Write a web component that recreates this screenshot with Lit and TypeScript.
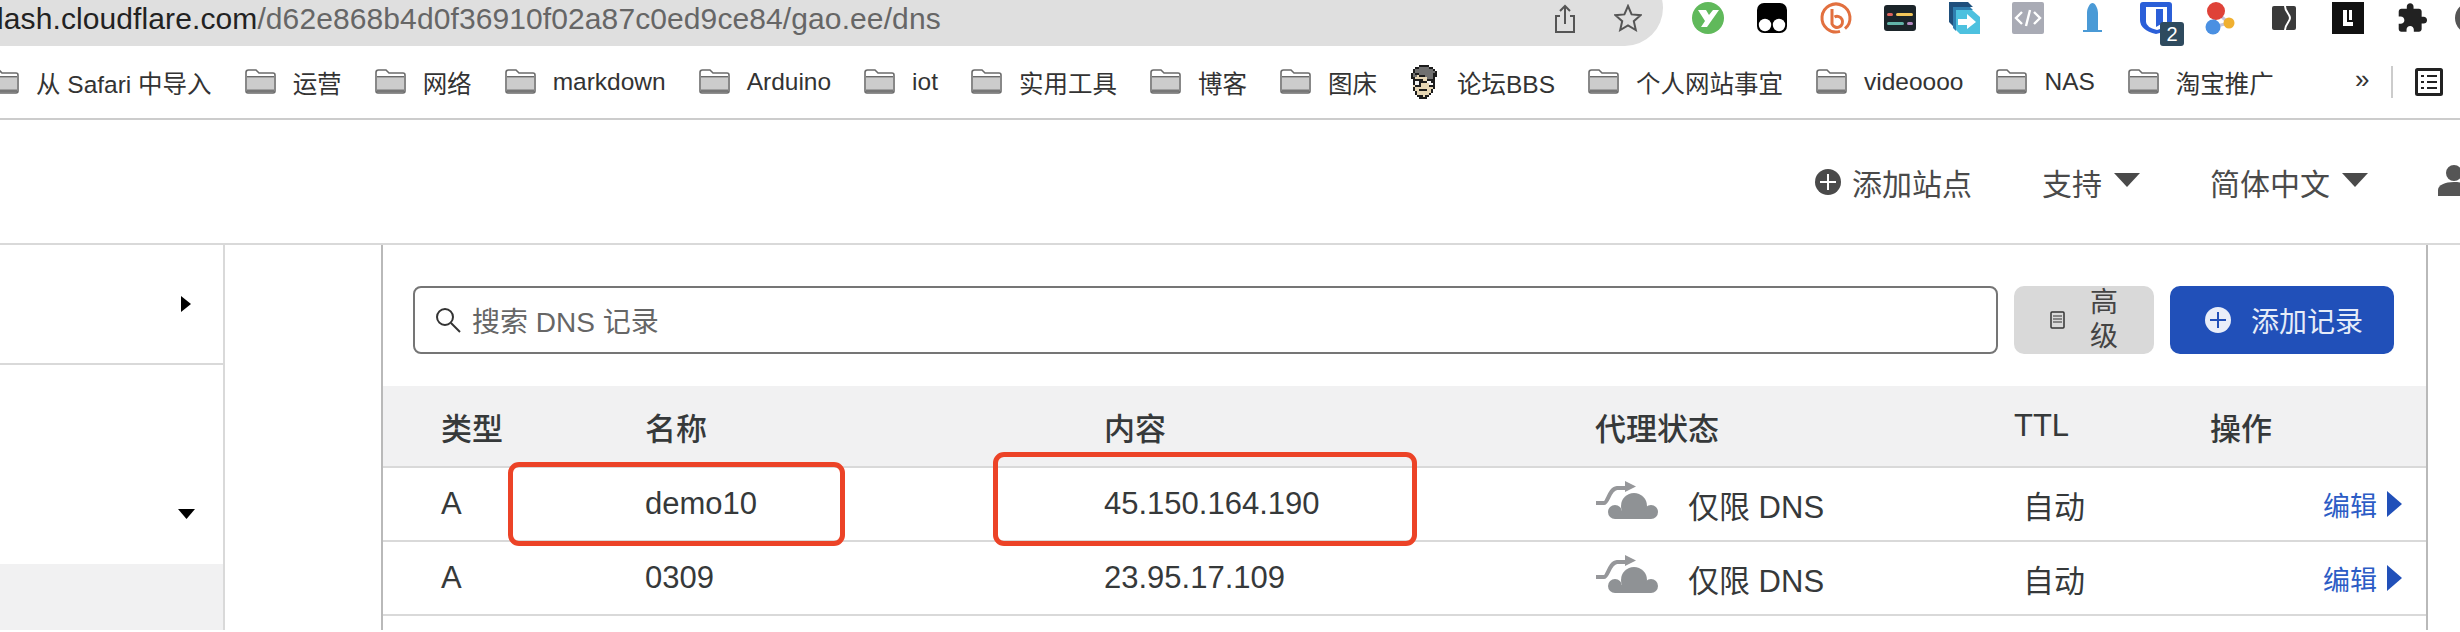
import { LitElement, html, css, svg } from 'lit';
import { customElement } from 'lit/decorators.js';

const bookmarks = ['运营', '网络', 'markdown', 'Arduino', 'iot', '实用工具', '博客', '图床', '论坛BBS', '个人网站事宜', 'videoooo', 'NAS', '淘宝推广'];

const face = [
  '....kkkkk....',
  '..kkgggggkk..',
  '.kgggggggggk.',
  '.kggggggggggk',
  'kgkkgggggggkk',
  'kggskkkggggkk',
  'kkssssssgggk.',
  '.kkkkksskkkk.',
  '.kwwkkkkwwkk.',
  '.kwwksssswwk.',
  '.skkksssskkk.',
  '.ksssssssssk.',
  '.ksskkkkssk..',
  '..ksssssssk..',
  '..kssssssk...',
  '...kkkskk....',
  '....kkkk.....',
];
const faceColors: Record<string, string> = { k: '#1c1c1c', g: '#707070', s: '#e6d6b4', w: '#f4f4f4' };

const folder = html`<svg class="bm-icon" viewBox="0 0 31 25">
  <path d="M1 3.5Q1 1 3.5 1H11L14 4H28Q30 4 30 6V22Q30 24 28 24H3Q1 24 1 22Z" fill="#fff" stroke="#6b6b6b" stroke-width="1.6"/>
  <rect x="2" y="8" width="27" height="14" fill="#ccc"/>
  <rect x="2" y="7" width="27" height="1.4" fill="#6b6b6b"/>
  <rect x="2" y="20.5" width="27" height="3" fill="#777"/>
</svg>`;

const avatar = html`<svg class="bm-face" viewBox="0 0 26 34">
  ${face.map((row, y) => [...row].map((c, x) => (c === '.' ? null : svg`<rect x=${x * 2} y=${y * 2} width="2" height="2" fill=${faceColors[c]}/>`)))}
</svg>`;

// every extension icon is drawn on a full 64x46 toolbar slot
const extensions = [
  svg`<circle cx="32" cy="18" r="16" fill="#60b95b"/><polygon points="22,10 30,10 33,15 37,10 43,10 31,27 25,27 29,21" fill="#fff"/>`,
  svg`<rect x="17" y="3" width="30" height="30" rx="7" fill="#000"/><circle cx="25" cy="25" r="6.2" fill="#fff"/><circle cx="39" cy="25" r="6.2" fill="#fff"/>`,
  svg`<path d="M36 31.4A14 14 0 1 1 41 28.7" fill="none" stroke="#e2703f" stroke-width="3"/><path d="M28 9V24a5.5 5.5 0 1 0 2.5-7" fill="none" stroke="#e2703f" stroke-width="3"/>`,
  svg`<rect x="16" y="5" width="32" height="26" rx="3" fill="#1b2429"/><rect x="19" y="13" width="6" height="3" rx="1.5" fill="#e0625c"/><rect x="28" y="13" width="17" height="3" rx="1.5" fill="#f2c65a"/><rect x="19" y="22" width="17" height="3" rx="1.5" fill="#62b3a8"/><rect x="39" y="22" width="6" height="3" rx="1.5" fill="#b58ac0"/>`,
  svg`<path d="M17 2H36L41 7H22V27L17 22Z" fill="#1f4f7c"/><path d="M21 7H38L41 10H24V31L21 28Z" fill="#2f7fb0"/><path d="M24 10H40L48 17V34H28L24 30Z" fill="#4dc1df"/><polygon points="26,19 35,19 35,14 44,22 35,29 35,25 26,25" fill="#fff"/>`,
  svg`<rect x="16" y="2" width="32" height="32" rx="2" fill="#a9abb5"/><path d="M26 12L20 18L26 24M38 12L44 18L38 24M34 10L30 26" fill="none" stroke="#fff" stroke-width="2.4"/>`,
  svg`<path d="M27 30V13C27 8 30 3 32.5 3C35 3 38 8 38 13V30H42V32H23V30Z" fill="#4a9ad6"/>`,
  svg`<path d="M16 5Q16 2 19 2H45Q48 2 48 5V20Q48 30 32 34Q16 30 16 20Z" fill="#2b5fd8"/><path d="M22 7H43V22Q43 27 33 30Q22 27 22 22Z" fill="#fff"/><path d="M32 9H39V23L32 27Z" fill="#2b5fd8"/>
    <rect x="36" y="22" width="24" height="24" rx="3" fill="#2e4a5e"/><text x="48" y="41" text-anchor="middle" font-size="20" fill="#fff">2</text>`,
  svg`<path d="M28 12L25 27L41 23Z" fill="none" stroke="#c6c3d8" stroke-width="3"/><circle cx="28" cy="11" r="9" fill="#df4238"/><circle cx="41" cy="23" r="5.5" fill="#f0b030"/><circle cx="25" cy="27" r="7.5" fill="#4a90e2"/>`,
  svg`<rect x="20" y="6" width="24" height="24" rx="2" fill="#3a3a3a"/><path d="M33 6C33 12 38 14 38 18C38 22 33 24 33 30" fill="none" stroke="#fff" stroke-width="2"/>`,
  svg`<rect x="16" y="2" width="32" height="32" fill="#111"/><polygon points="27,10 31,10 31,22 37,22 37,26 27,26" fill="#fff"/><rect x="33" y="10" width="3" height="10" fill="#fff"/>`,
  svg`<path transform="translate(16,2) scale(1.35)" fill="#222" d="M20.5 11H19V7c0-1.1-.9-2-2-2h-4V3.5C13 2.12 11.88 1 10.5 1S8 2.12 8 3.5V5H4c-1.1 0-1.99.9-1.99 2v3.8H3.5c1.49 0 2.7 1.21 2.7 2.7s-1.21 2.7-2.7 2.7H2V20c0 1.1.9 2 2 2h3.8v-1.5c0-1.49 1.21-2.7 2.7-2.7 1.49 0 2.7 1.21 2.7 2.7V22H17c1.1 0 2-.9 2-2v-4h1.5c1.38 0 2.5-1.12 2.5-2.5S21.88 11 20.5 11z"/>`,
];

const plus = (bg: string, fg: string) => html`<svg class="plus" viewBox="0 0 26 26">
  <circle cx="13" cy="13" r="13" fill=${bg}/><path d="M13 5V21M5 13H21" stroke=${fg} stroke-width="2"/>
</svg>`;

const caretDown = html`<svg class="caret" viewBox="0 0 26 14"><polygon points="0,0 26,0 13,14" fill="#4a4a4a"/></svg>`;

const cloud = html`<svg class="cloud" viewBox="0 0 63 38">
  <path d="M1 22H9C13 22 14 8 22 7H31" fill="none" stroke="#96979a" stroke-width="4"/>
  <polygon points="30,0 41,5.5 30,11" fill="#96979a"/>
  <circle cx="39" cy="25" r="15.5" fill="#fff"/>
  <circle cx="39" cy="25" r="13" fill="#8f9295"/>
  <circle cx="20" cy="31" r="7" fill="#8f9295"/>
  <circle cx="56" cy="31" r="7" fill="#8f9295"/>
  <rect x="20" y="30" width="36" height="8" fill="#8f9295"/>
</svg>`;

const records = [
  { name: 'demo10', content: '45.150.164.190' },
  { name: '0309', content: '23.95.17.109' },
];

@customElement('app-root')
export class AppRoot extends LitElement {
  static styles = css`
    :host {
      display: block;
      width: 2460px;
      height: 632px;
      overflow: hidden;
      background: #fff;
      font-family: 'Liberation Sans', 'Noto Sans CJK SC', sans-serif;
      position: relative;
    }

    /* browser chrome */
    .topbar {
      display: flex;
      height: 46px;
      overflow: hidden;
    }
    .url-bar {
      flex: none;
      display: flex;
      align-items: flex-start;
      width: 1663px;
      height: 76px;
      margin-top: -30px;
      padding: 30px 21px 0 0;
      box-sizing: border-box;
      background: #dfdfdf;
      border-radius: 0 38px 38px 0;
    }
    .url {
      flex: 1;
      margin-left: -13px;
      font-size: 30px;
      letter-spacing: 0.1px;
      line-height: 37px;
      color: #666;
      white-space: nowrap;
    }
    .url b {
      font-weight: 400;
      color: #222;
    }
    .share {
      width: 22px;
      height: 30px;
      margin: 4px 38px 0 0;
    }
    .star {
      width: 28px;
      height: 28px;
      margin-top: 4px;
    }
    .ext {
      flex: none;
      width: 64px;
      height: 46px;
    }
    .exts {
      display: flex;
      margin-left: 13px;
    }
    .profile {
      flex: none;
      width: 32px;
      height: 32px;
      margin: 2px 0 0 11px;
      border-radius: 50%;
      background: #555;
    }

    .bookmarks {
      display: flex;
      align-items: center;
      gap: 33px;
      height: 72px;
      margin-left: -12px;
      border-bottom: 2px solid #ccc;
      font-size: 24.5px;
      color: #333;
      white-space: nowrap;
      position: relative;
    }
    .bm {
      display: flex;
      align-items: center;
      gap: 17px;
    }
    .bm-icon {
      width: 31px;
      height: 25px;
      margin-top: -1px;
    }
    .bm-face {
      width: 26px;
      height: 34px;
      margin-left: 1px;
      margin-right: 3px;
    }
    .more {
      position: absolute;
      left: 2367px;
      top: 18px;
      font-size: 26px;
    }
    .divider {
      position: absolute;
      left: 2403px;
      top: 20px;
      width: 2px;
      height: 32px;
      background: #ccc;
    }
    .list {
      position: absolute;
      left: 2427px;
      top: 22px;
      width: 28px;
      height: 28px;
    }

    /* site nav */
    .nav {
      display: flex;
      align-items: center;
      justify-content: flex-end;
      height: 125px;
      margin-right: -10px;
      box-sizing: border-box;
      border-bottom: 2px solid #d9d9d9;
      font-size: 30px;
      color: #4a4a4a;
    }
    .nav-item {
      display: flex;
      align-items: center;
      margin-right: 70px;
    }
    .plus {
      flex: none;
      width: 26px;
      height: 26px;
    }
    .nav .plus {
      margin-right: 11px;
    }
    .caret {
      width: 26px;
      height: 14px;
      margin-left: 12px;
      margin-top: -4px;
    }
    .user {
      width: 32px;
      height: 32px;
      margin-top: -4px;
    }

    .main {
      display: flex;
      height: 385px;
    }
    .sidebar {
      flex: none;
      display: flex;
      flex-direction: column;
      width: 223px;
      border-right: 2px solid #d9d9d9;
    }
    .side-top {
      display: flex;
      align-items: center;
      justify-content: flex-end;
      height: 118px;
      padding-right: 32px;
      border-bottom: 2px solid #d9d9d9;
    }
    .side-mid {
      display: flex;
      justify-content: flex-end;
      height: 199px;
      padding: 144px 28px 0 0;
      box-sizing: border-box;
    }
    .side-low {
      flex: 1;
      background: #f1f1f2;
    }
    .tri-right {
      width: 10px;
      height: 16px;
    }
    .tri-down {
      width: 17px;
      height: 10px;
    }

    .card {
      flex: none;
      width: 2047px;
      margin-left: 156px;
      box-sizing: border-box;
      border-left: 2px solid #b9b9b9;
      border-right: 2px solid #b9b9b9;
    }
    .tools {
      display: flex;
      gap: 16px;
      height: 68px;
      padding: 41px 32px 32px 30px;
    }
    .search {
      flex: 1;
      display: flex;
      align-items: center;
      gap: 11px;
      padding-left: 20px;
      border: 2px solid #757575;
      border-radius: 8px;
      font-size: 28px;
      color: #666;
    }
    .search svg {
      width: 26px;
      height: 26px;
    }
    .adv {
      flex: none;
      display: flex;
      align-items: center;
      justify-content: center;
      gap: 25px;
      width: 140px;
      background: #d9d9d9;
      border-radius: 10px;
      font-size: 28px;
      line-height: 34px;
      color: #444;
    }
    .adv svg {
      width: 15px;
      height: 18px;
    }
    .adv span {
      width: 28px;
    }
    .add {
      flex: none;
      display: flex;
      align-items: center;
      gap: 20px;
      width: 224px;
      padding-left: 35px;
      box-sizing: border-box;
      background: #2150b9;
      border-radius: 10px;
      font-size: 28px;
      color: #e6ecf8;
    }

    .row {
      display: grid;
      grid-template-columns: 204px 459px 491px 419px 196px 1fr;
      align-items: center;
      height: 72px;
      padding-left: 58px;
      border-bottom: 2px solid #d9d9d9;
      font-size: 31px;
      color: #36393a;
    }
    .head {
      height: 80px;
      background: #f1f1f2;
      font-weight: 500;
      font-size: 31px;
    }
    .status {
      display: flex;
      align-items: center;
      gap: 30px;
    }
    .cloud {
      width: 63px;
      height: 38px;
      margin-bottom: 8px;
    }
    .ttl {
      padding-left: 9px;
    }
    .edit {
      display: flex;
      align-items: center;
      justify-content: flex-end;
      gap: 10px;
      padding-right: 24px;
      font-size: 27px;
      color: #2c5cc5;
    }
    .edit svg {
      width: 15px;
      height: 26px;
    }

    .mark {
      position: absolute;
      box-sizing: border-box;
      border: 5px solid #ec4327;
      border-radius: 11px;
    }
    .mark-name {
      left: 508px;
      top: 462px;
      width: 337px;
      height: 84px;
    }
    .mark-content {
      left: 993px;
      top: 452px;
      width: 424px;
      height: 94px;
    }
  `;

  render() {
    return html`
      <div class="topbar">
        <div class="url-bar">
          <div class="url"><b>dash.cloudflare.com</b>/d62e868b4d0f36910f02a87c0ed9ce84/gao.ee/dns</div>
          <svg class="share" viewBox="0 0 22 30" fill="none" stroke="#555" stroke-width="2">
            <path d="M6 12H2V28H20V12H16M11 20V2M6 7L11 2L16 7"/>
          </svg>
          <svg class="star" viewBox="0 0 28 28" fill="none" stroke="#555" stroke-width="2">
            <path d="M14 2L17.6 10.4L26.6 11.2L19.8 17.2L21.8 26L14 21.4L6.2 26L8.2 17.2L1.4 11.2L10.4 10.4Z"/>
          </svg>
        </div>
        <div class="exts">
          ${extensions.map(e => html`<svg class="ext" viewBox="0 0 64 46">${e}</svg>`)}
        </div>
        <div class="profile"></div>
      </div>

      <div class="bookmarks">
        <div class="bm">${folder}<span>从 Safari 中导入</span></div>
        ${bookmarks.map(b => html`<div class="bm">${b === '论坛BBS' ? avatar : folder}<span>${b}</span></div>`)}
        <span class="more">»</span>
        <div class="divider"></div>
        <svg class="list" viewBox="0 0 28 28" fill="none" stroke="#222">
          <rect x="1.5" y="1.5" width="25" height="25" rx="1" stroke-width="3"/>
          <path d="M6 8H9M12 8H22M6 14H9M12 14H22M6 20H9M12 20H22" stroke-width="2"/>
        </svg>
      </div>

      <div class="nav">
        <div class="nav-item">${plus('#4a4a4a', '#fff')}<span>添加站点</span></div>
        <div class="nav-item"><span>支持</span>${caretDown}</div>
        <div class="nav-item"><span>简体中文</span>${caretDown}</div>
        <svg class="user" viewBox="0 0 32 32" fill="#555">
          <circle cx="16" cy="9" r="8"/><path d="M0 32V26C0 21 7 18 16 18S32 21 32 26V32Z"/>
        </svg>
      </div>

      <div class="main">
        <div class="sidebar">
          <div class="side-top"><svg class="tri-right" viewBox="0 0 10 16"><polygon points="0,0 10,8 0,16"/></svg></div>
          <div class="side-mid"><svg class="tri-down" viewBox="0 0 17 10"><polygon points="0,0 17,0 8.5,10"/></svg></div>
          <div class="side-low"></div>
        </div>
        <div class="card">
          <div class="tools">
            <div class="search">
              <svg viewBox="0 0 26 26" fill="none" stroke="#333" stroke-width="2"><circle cx="10" cy="10" r="8"/><path d="M16 16L25 25"/></svg>
              <span>搜索 DNS 记录</span>
            </div>
            <div class="adv">
              <svg viewBox="0 0 15 18" fill="none" stroke="#333" stroke-width="1.5">
                <rect x="1" y="1" width="13" height="16" rx="1"/><path d="M3 5H12M3 8H12M3 11H12" stroke-width="1.2"/>
              </svg>
              <span>高级</span>
            </div>
            <div class="add">${plus('#e9eef9', '#2150b9')}<span>添加记录</span></div>
          </div>
          <div class="row head">
            <span>类型</span><span>名称</span><span>内容</span><span>代理状态</span><span>TTL</span><span>操作</span>
          </div>
          ${records.map(r => html`
            <div class="row">
              <span>A</span>
              <span>${r.name}</span>
              <span>${r.content}</span>
              <div class="status">${cloud}<span>仅限 DNS</span></div>
              <span class="ttl">自动</span>
              <div class="edit"><span>编辑</span><svg viewBox="0 0 15 26"><polygon points="0,0 15,13 0,26" fill="#2150b9"/></svg></div>
            </div>
          `)}
        </div>
      </div>

      <div class="mark mark-name"></div>
      <div class="mark mark-content"></div>
    `;
  }
}
